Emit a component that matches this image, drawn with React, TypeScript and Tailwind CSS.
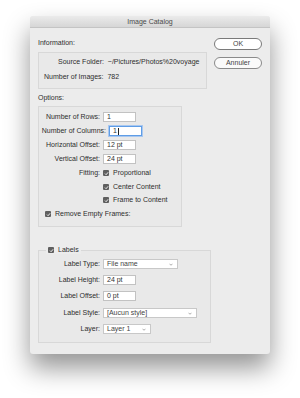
import React from "react";

const FONT = { fontFamily: '"Liberation Sans", Arial, sans-serif' };

function Check() {
  return (
    <span className="flex h-[6px] w-[6px] shrink-0 items-center justify-center rounded-[1px] bg-[#5f5f5f]">
      <svg width="5" height="5" viewBox="0 0 10 10">
        <path d="M2 5.2 L4.2 7.4 L8.2 2.6" fill="none" stroke="#fff" strokeWidth="1.8" />
      </svg>
    </span>
  );
}

function Field({ value, w = "w-[33px]", focused = false }: { value: string; w?: string; focused?: boolean }) {
  return (
    <div
      className={`flex h-[10px] ${w} items-center bg-white pl-[3px] text-[#333] ${
        focused ? "border border-[#5f9de6] shadow-[0_0_0_1px_#a9c8f0]" : "border border-[#c2c2c2]"
      }`}
    >
      {value}
      {focused && <span className="ml-px h-[7px] w-px bg-[#222]" />}
    </div>
  );
}

function Select({ value, w }: { value: string; w: string }) {
  return (
    <div className={`flex h-[10px] ${w} items-center justify-between border border-[#c8c8c8] bg-white pl-[3px] pr-[4px] text-[#444]`}>
      <span>{value}</span>
      <svg width="4" height="3" viewBox="0 0 8 5">
        <path d="M1 1 L4 4 L7 1" fill="none" stroke="#777" strokeWidth="1.2" />
      </svg>
    </div>
  );
}

function Row({ label, children, labelW = "w-[64px]" }: { label: string; children: React.ReactNode; labelW?: string }) {
  return (
    <div className="flex h-[10px] items-center">
      <span className={`${labelW} shrink-0 pr-[3px] text-right`}>{label}</span>
      {children}
    </div>
  );
}

function CheckRow({ label, text }: { label?: string; text: string }) {
  return (
    <div className="flex h-[8px] items-center">
      <span className="w-[64px] shrink-0 pr-[3px] text-right">{label}</span>
      <Check />
      <span className="ml-[4px]">{text}</span>
    </div>
  );
}

export default function App() {
  return (
    <div className="min-h-screen bg-white pl-[30px] pt-[16px] text-[7px] leading-[8px] text-[#2e2e2e]" style={FONT}>
      <div className="h-[338px] w-[240px] rounded-[3px] bg-[#ececec] shadow-[0_14px_26px_rgba(0,0,0,0.42)]">
        {/* title bar */}
        <div className="flex h-[12px] items-center justify-center rounded-t-[3px] border-b border-[#c4c4c4] bg-gradient-to-b from-[#ebebeb] to-[#d6d6d6] text-[#4a4a4a]">
          Image Catalog
        </div>

        <div className="px-[8px]">
          <div className="flex justify-between">
            <div className="w-[169px]">
              <div className="mt-[11px]">Information:</div>
              <div className="mt-[5px] h-[37px] border border-[#d8d8d8] bg-[#e9e9e9] pt-[5px]">
                <div className="pl-[19px]">Source Folder:&nbsp; ~/Pictures/Photos%20voyage</div>
                <div className="mt-[7px] pl-[5px]">Number of Images:&nbsp; 782</div>
              </div>
            </div>
            <div className="mt-[10px] flex w-[48px] flex-col gap-[7px]">
              <button className="h-[12px] rounded-full border border-[#7a7a7a] bg-white text-[#444]">OK</button>
              <button className="h-[12px] rounded-full border border-[#8a8a8a] bg-[#fafafa] text-[#444]">Annuler</button>
            </div>
          </div>

          <div className="mt-[5px]">Options:</div>
          <div className="mt-[4px] flex h-[121px] w-[144px] flex-col border border-[#d8d8d8] bg-[#e9e9e9] pt-[5px]">
            <div className="flex flex-col gap-[4px]">
              <Row label="Number of Rows:">
                <Field value="1" />
              </Row>
              <Row label="Number of Columns:" labelW="w-[70px]">
                <Field value="1" focused />
              </Row>
              <Row label="Horizontal Offset:">
                <Field value="12 pt" />
              </Row>
              <Row label="Vertical Offset:">
                <Field value="24 pt" />
              </Row>
            </div>
            <div className="mt-[5px]">
              <CheckRow label="Fitting:" text="Proportional" />
            </div>
            <div className="mt-[6px]">
              <CheckRow text="Center Content" />
            </div>
            <div className="mt-[5px]">
              <CheckRow text="Frame to Content" />
            </div>
            <div className="mt-[6px] flex h-[8px] items-center pl-[6px]">
              <Check />
              <span className="ml-[4px]">Remove Empty Frames:</span>
            </div>
          </div>

          <fieldset className="mt-[19px] w-[173px] border border-[#d8d8d8] bg-[#e9e9e9] pb-[8px]">
            <legend className="ml-[7px] flex h-[8px] items-center bg-[#ececec] px-[2px]">
              <Check />
              <span className="ml-[4px]">Labels</span>
            </legend>
            <div className="mt-[5px] flex flex-col">
              <Row label="Label Type:">
                <Select value="File name" w="w-[75px]" />
              </Row>
              <div className="mt-[6px]">
                <Row label="Label Height:">
                  <Field value="24 pt" />
                </Row>
              </div>
              <div className="mt-[6px]">
                <Row label="Label Offset:">
                  <Field value="0 pt" />
                </Row>
              </div>
              <div className="mt-[7px]">
                <Row label="Label Style:">
                  <Select value="[Aucun style]" w="w-[94px]" />
                </Row>
              </div>
              <div className="mt-[6px]">
                <Row label="Layer:">
                  <Select value="Layer 1" w="w-[48px]" />
                </Row>
              </div>
            </div>
          </fieldset>
        </div>
      </div>
    </div>
  );
}
